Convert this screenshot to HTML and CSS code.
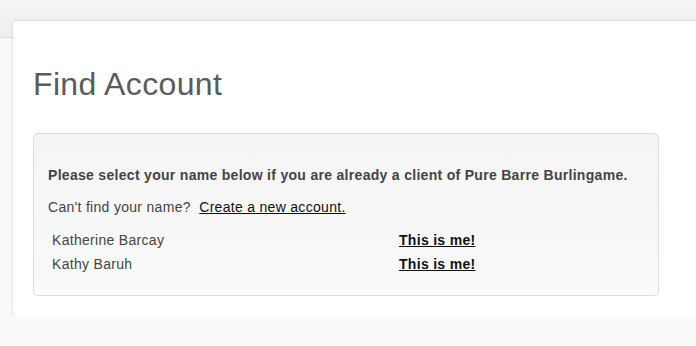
FILE: index.html
```html
<!DOCTYPE html>
<html lang="en">
<head>
    <meta charset="UTF-8">
    <title>Find Account</title>
    <link rel="stylesheet" href="styles.css">
</head>
<body>

    <div class="top-bar"></div>

    <div class="card">
        <h1>Find Account</h1>

        <div class="find-box">
            <p class="intro">Please select your name below if you are already a client of Pure Barre Burlingame.</p>
            <p class="new-account">Can't find your name?&nbsp; <a href="#">Create a new account.</a></p>

            <table class="matches">
                <tr>
                    <td class="name">Katherine Barcay</td>
                    <td><a href="#" class="pick">This is me!</a></td>
                </tr>
                <tr>
                    <td class="name">Kathy Baruh</td>
                    <td><a href="#" class="pick">This is me!</a></td>
                </tr>
            </table>
        </div>
    </div>

</body>
</html>
```

FILE: styles.css
```css
* {
    margin: 0;
    padding: 0;
    box-sizing: border-box;
    font-family: "Liberation Sans", Arial, sans-serif;
}

body {
    background-color: #f9f9f9;
    overflow: hidden;
}

.top-bar {
    height: 38px;
    background: linear-gradient(#f4f4f4, #efefef);
    border-bottom: 1px solid #dcdcdc;
}

.card {
    margin: -17px -10px 0 13px;
    padding: 45px 47px 20px 20px;
    height: 295px;
    background-color: #fff;
    border-radius: 4px 0 0 4px;
    box-shadow: 0 0 3px rgba(0, 0, 0, 0.18);
}

h1 {
    font-size: 32px;
    line-height: 36px;
    font-weight: normal;
    letter-spacing: 0.35px;
    color: #5b5b5b;
    margin-bottom: 31px;
}

.find-box {
    height: 163px;
    padding: 31px 14px 0 14px;
    background: linear-gradient(#f5f5f5, #fafafa);
    border: 1px solid #dcdcdc;
    border-radius: 5px;
    font-size: 14px;
    line-height: 20px;
    letter-spacing: 0.3px;
    color: #444;
}

.intro {
    font-weight: bold;
    margin-bottom: 12px;
}

.new-account {
    margin-bottom: 11px;
}

.new-account a {
    color: #111;
    text-decoration: underline;
}

.matches {
    border-collapse: collapse;
}

.matches td {
    padding: 2px 4px;
    font-size: 14px;
    line-height: 20px;
}

.matches .name {
    width: 347px;
    color: #444;
}

.pick {
    color: #111;
    font-weight: bold;
    text-decoration: underline;
}
```
